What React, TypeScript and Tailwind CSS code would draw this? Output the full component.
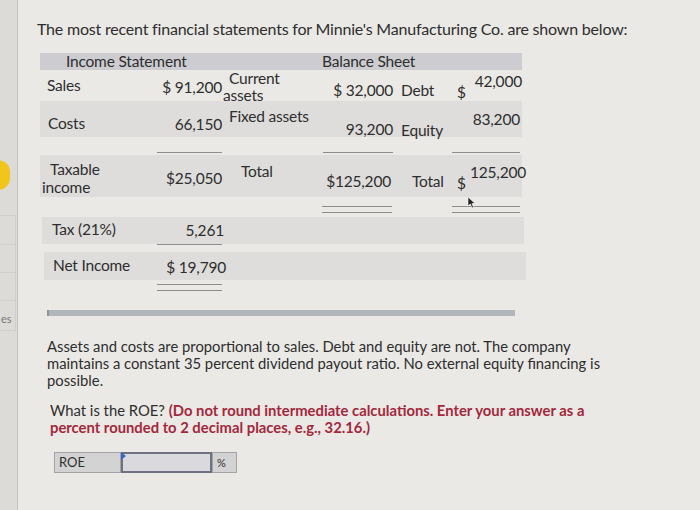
const font = { fontFamily: "Lato, 'Open Sans', sans-serif" };

const cols = "grid grid-cols-[110px_72px_93px_78px_59px_18px_52px] w-[482px]";

function Lines({ double, w }: { double?: boolean; w: string }) {
  return (
    <div className={`flex flex-col gap-[5px] ${w}`}>
      <div className="h-px bg-[#8d8d8d]" />
      {double && <div className="h-px bg-[#8d8d8d]" />}
    </div>
  );
}

export default function App() {
  return (
    <div className="w-[700px] h-[510px] bg-[#eae9e5] text-[#2e2e2e] flex overflow-hidden" style={font}>
      {/* photo edge / sidebar */}
      <div className="w-[18px] shrink-0 bg-[#dcdbd7] border-r border-[#c4c3bf] relative">
        <div className="absolute left-[-14px] top-[160px] w-[24px] h-[30px] rounded-full bg-[#f2c51b]" />
        <div className="absolute left-0 top-[215px] w-[16px] flex flex-col">
          <div className="h-[30px] border-y border-r border-[#cfcfcb]" />
          <div className="h-[28px] border-b border-r border-[#cfcfcb]" />
          <div className="h-[28px] border-b border-r border-[#cfcfcb]" />
          <div className="h-[30px] border-b border-r border-[#cfcfcb] text-[11px] text-[#777] pt-[10px] pl-[1px]">es</div>
        </div>
      </div>

      <div className="flex-1 pl-[19px] pt-[19px]">
        <p className="text-[16px] leading-[20px] tracking-[-0.2px] whitespace-nowrap">
          The most recent financial statements for Minnie's Manufacturing Co. are shown below:
        </p>

        {/* table */}
        <div className="mt-[14px] ml-[3px] text-[15.5px] leading-[17px] tracking-[-0.2px]">
          <div className={`${cols} h-[17px] bg-[#cdcdd1] items-center`}>
            <div className="col-span-2 pl-[26px] whitespace-nowrap">Income Statement</div>
            <div />
            <div className="col-span-4 pl-[7px]">Balance Sheet</div>
          </div>

          {/* Sales / Current assets / Debt */}
          <div className={`${cols} h-[31px]`}>
            <div className="pl-[7px] pt-[7px]">Sales</div>
            <div className="text-right pt-[9px] whitespace-nowrap">$ 91,200</div>
            <div className="pl-[1px] leading-[17px]">
              <div className="pl-[6px]">Current</div>
              <div>assets</div>
            </div>
            <div className="text-right pt-[12px] whitespace-nowrap">$ 32,000</div>
            <div className="pl-[8px] pt-[12px]">Debt</div>
            <div className="pl-[5px] pt-[14px]">$</div>
            <div className="text-right pt-[3px]">42,000</div>
          </div>

          {/* Costs / Fixed assets / Equity */}
          <div className={`${cols} h-[36px] bg-[#dedddb]`}>
            <div className="pl-[8px] pt-[14px]">Costs</div>
            <div className="text-right pt-[15px]">66,150</div>
            <div className="pl-[7px] pt-[7px] whitespace-nowrap">Fixed assets</div>
            <div className="text-right pt-[20px]">93,200</div>
            <div className="pl-[8px] pt-[21px]">Equity</div>
            <div />
            <div className="text-right pt-[10px] pr-[2px]">83,200</div>
          </div>

          {/* underlines */}
          <div className={`${cols} h-[18px] items-end pb-[2px]`}>
            <div />
            <div className="flex justify-end"><Lines w="w-[65px]" /></div>
            <div />
            <div className="flex justify-end"><Lines w="w-[70px]" /></div>
            <div />
            <div className="col-span-2 flex justify-end pr-[2px]"><Lines w="w-[72px]" /></div>
          </div>

          {/* Taxable income / Total */}
          <div className={`${cols} h-[42px] bg-[#dedddb]`}>
            <div className="pt-[5px] leading-[18px]">
              <div className="pl-[10px]">Taxable</div>
              <div className="pl-[2px]">income</div>
            </div>
            <div className="text-right pt-[15px]">$25,050</div>
            <div className="pl-[19px] pt-[8px]">Total</div>
            <div className="text-right pt-[18px] pr-[2px]">$125,200</div>
            <div className="pl-[19px] pt-[18px]">Total</div>
            <div className="pl-[5px] pt-[20px]">$</div>
            <div className="text-right pt-[9px] pr-[2px]">125,200</div>
          </div>

          {/* double underlines under totals */}
          <div className={`${cols} h-[20px] pt-[9px] relative`}>
            <div />
            <div />
            <div />
            <div className="flex justify-end pr-[1px]"><Lines double w="w-[70px]" /></div>
            <div />
            <div className="col-span-2 flex justify-end pr-[2px]"><Lines double w="w-[72px]" /></div>
            <svg className="absolute left-[427px] top-[-1px]" width="9" height="13" viewBox="0 0 9 13">
              <path d="M1 1 L1 10 L3.3 8 L5 12 L6.5 11.3 L4.9 7.6 L8 7.4 Z" fill="#222" stroke="#fff" strokeWidth="0.6" />
            </svg>
          </div>

          {/* Tax */}
          <div className={`${cols} h-[27px] bg-[#dedddb] w-[478px] ml-[2px]`}>
            <div className="pl-[10px] pt-[4px]">Tax (21%)</div>
            <div className="text-right pt-[5px]">5,261</div>
          </div>
          <div className={`${cols} h-[8px]`}>
            <div />
            <div className="flex justify-end"><Lines w="w-[65px]" /></div>
          </div>

          {/* Net Income */}
          <div className={`${cols} h-[28px] bg-[#dedddb] w-[476px] ml-[4px]`}>
            <div className="pl-[9px] pt-[5px] whitespace-nowrap">Net Income</div>
            <div className="text-right pt-[7px] whitespace-nowrap">$ 19,790</div>
          </div>
          <div className={`${cols} h-[14px] pt-[4px]`}>
            <div />
            <div className="flex justify-end"><Lines double w="w-[65px]" /></div>
          </div>

          {/* bottom bar */}
          <div className="mt-[16px] ml-[7px] w-[468px] h-[6px] bg-[#b1b5bc] border-l-2 border-[#8f9399]" />
        </div>

        {/* text */}
        <p className="mt-[22px] ml-[10px] text-[14.8px] leading-[17px] whitespace-nowrap">
          Assets and costs are proportional to sales. Debt and equity are not. The company
          <br />
          maintains a constant 35 percent dividend payout ratio. No external equity financing is
          <br />
          possible.
        </p>

        <p className="mt-[13px] ml-[13px] text-[14.8px] leading-[17px] whitespace-nowrap">
          What is the ROE?{" "}
          <span className="font-bold text-[#a3283c]">
            (Do not round intermediate calculations. Enter your answer as a
            <br />
            percent rounded to 2 decimal places, e.g., 32.16.)
          </span>
        </p>

        <div className="mt-[16px] ml-[17px] flex h-[21px] text-[13px]">
          <div className="w-[67px] bg-[#d3d3d3] border border-[#a3a3a3] pl-[4px] leading-[19px]">ROE</div>
          <div className="w-[91px] bg-[#dadade] border-2 border-[#6e7280] relative">
            <div className="absolute left-[-2px] top-[-2px] w-0 h-0 border-t-[4px] border-b-[4px] border-l-[5px] border-t-transparent border-b-transparent border-l-[#3b64c4]" />
          </div>
          <div className="w-[25px] bg-[#d3d3d3] border border-[#a3a3a3] pl-[4px] leading-[19px] text-[11px]">%</div>
        </div>
      </div>
    </div>
  );
}
